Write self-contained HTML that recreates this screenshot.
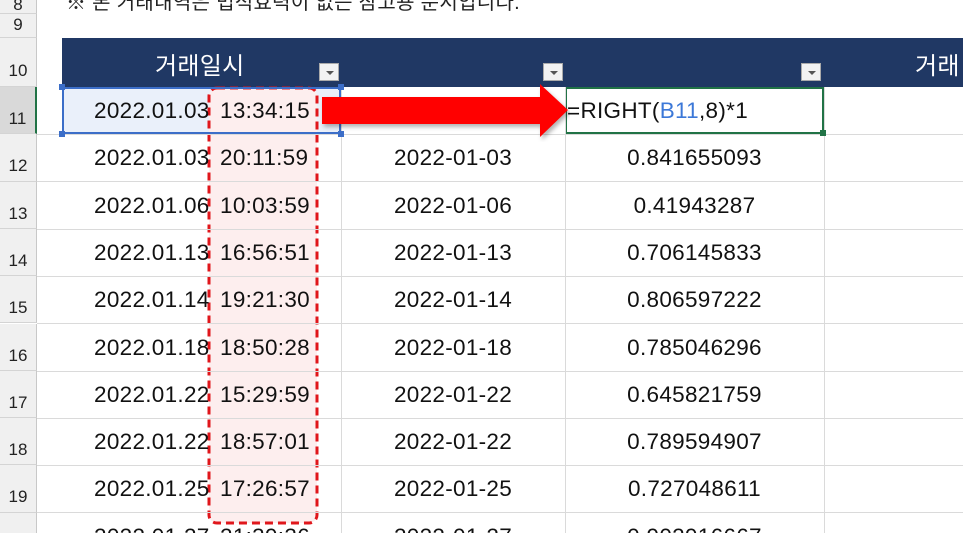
<!DOCTYPE html>
<html><head><meta charset="utf-8"><style>
html,body{margin:0;width:963px;height:533px;overflow:hidden}
body{background:#fff;font-family:"Liberation Sans","Noto Sans CJK KR",sans-serif;position:relative}
.a{position:absolute}
.rh{position:absolute;left:0;width:37px;background:#f0f0f0;border-right:1px solid #c8c8c8;text-align:center;font-size:17px;color:#222;box-sizing:border-box;border-bottom:1px solid #d4d4d4}
.hl{position:absolute;left:37px;width:926px;height:1px;background:#dadada}
.vl{position:absolute;top:87px;width:1px;height:446px;background:#dadada}
.t{position:absolute;font-size:22.5px;color:#111;white-space:nowrap;letter-spacing:0.3px}
.c{text-align:center}
.dd{position:absolute;width:20px;height:18px;background:#f2f2f2;border:1px solid #aaa;box-sizing:border-box}
.dd:after{content:"";position:absolute;left:6px;top:7px;border-left:4px solid transparent;border-right:4px solid transparent;border-top:4px solid #555}
</style></head><body>
<div class="rh" style="top:-10px;height:24px;line-height:30px">8</div>
<div class="rh" style="top:14px;height:24px;line-height:22px">9</div>
<div class="rh" style="top:38px;height:49px;line-height:66px">10</div>
<div class="rh" style="top:87px;height:47px;line-height:64px;background:#d9d9d9;border-right:2px solid #217346">11</div>
<div class="t" style="left:66px;top:-14px;font-size:20px;color:#222">※ 본 거래내역은 법적효력이 없는 참고용 문서입니다.</div>
<div class="a" style="left:62px;top:38px;width:901px;height:49px;background:#203864"></div>
<div class="t" style="left:155px;top:46px;color:#fff;font-size:24px">거래일시</div>
<div class="t" style="left:915px;top:46px;color:#fff;font-size:24px">거래</div>
<div class="dd" style="left:319px;top:63px"></div>
<div class="dd" style="left:543px;top:63px"></div>
<div class="dd" style="left:801px;top:63px"></div>
<div class="a" style="left:62px;top:87px;width:279px;height:47px;background:#eaf0fa"></div>
<svg class="a" style="left:206px;top:85px" width="115" height="442"><rect x="3" y="3" width="108" height="435" rx="8" fill="#fdeeee" stroke="#e0161b" stroke-width="3" stroke-dasharray="8,5"/></svg>
<div class="a" style="left:62px;top:87px;width:279px;height:47px;border:2px solid #3c6ec8;box-sizing:border-box"></div>
<div class="a" style="left:565px;top:87px;width:259px;height:47px;border:2px solid #217346;box-sizing:border-box"></div>
<script>
var rows=[["2022.01.03","13:34:15","",""],["2022.01.03","20:11:59","2022-01-03","0.841655093"],["2022.01.06","10:03:59","2022-01-06","0.41943287"],["2022.01.13","16:56:51","2022-01-13","0.706145833"],["2022.01.14","19:21:30","2022-01-14","0.806597222"],["2022.01.18","18:50:28","2022-01-18","0.785046296"],["2022.01.22","15:29:59","2022-01-22","0.645821759"],["2022.01.22","18:57:01","2022-01-22","0.789594907"],["2022.01.25","17:26:57","2022-01-25","0.727048611"],["2022.01.27","21:39:36","2022-01-27","0.902916667"]];
var h="";
for(var i=0;i<rows.length;i++){var y=87+i*47.3;
if(i>0)h+='<div class="rh" style="top:'+y+'px;height:47.3px;line-height:64px">'+(11+i)+'</div>';
h+='<div class="hl" style="top:'+(y+47)+'px"></div>';
var r=rows[i];
h+='<div class="t" style="left:94px;top:'+(y+11)+'px">'+r[0]+'</div>';
h+='<div class="t" style="left:220px;top:'+(y+11)+'px">'+r[1]+'</div>';
h+='<div class="t c" style="left:341px;width:224px;top:'+(y+11)+'px">'+r[2]+'</div>';
h+='<div class="t c" style="left:565px;width:259px;top:'+(y+11)+'px">'+r[3]+'</div>';}
h+='<div class="vl" style="left:341px"></div><div class="vl" style="left:565px"></div><div class="vl" style="left:824px"></div>';
document.write(h);
</script>
<div class="t" style="left:567px;top:98px">=RIGHT(<span style="color:#3c78d8">B11</span>,8)*1</div>
<svg class="a" style="left:320px;top:82px" width="250" height="60"><polygon points="2,15 220,15 220,2 248,28 220,55 220,42 2,42" fill="#ff0000" filter="drop-shadow(2px 3px 2px rgba(0,0,0,.3))"/></svg>
<div class="a" style="left:59px;top:84px;width:6px;height:6px;background:#3c6ec8"></div>
<div class="a" style="left:338px;top:84px;width:6px;height:6px;background:#3c6ec8"></div>
<div class="a" style="left:59px;top:131px;width:6px;height:6px;background:#3c6ec8"></div>
<div class="a" style="left:338px;top:131px;width:6px;height:6px;background:#3c6ec8"></div>
<div class="a" style="left:820px;top:130px;width:6px;height:6px;background:#217346"></div>
</body></html>
